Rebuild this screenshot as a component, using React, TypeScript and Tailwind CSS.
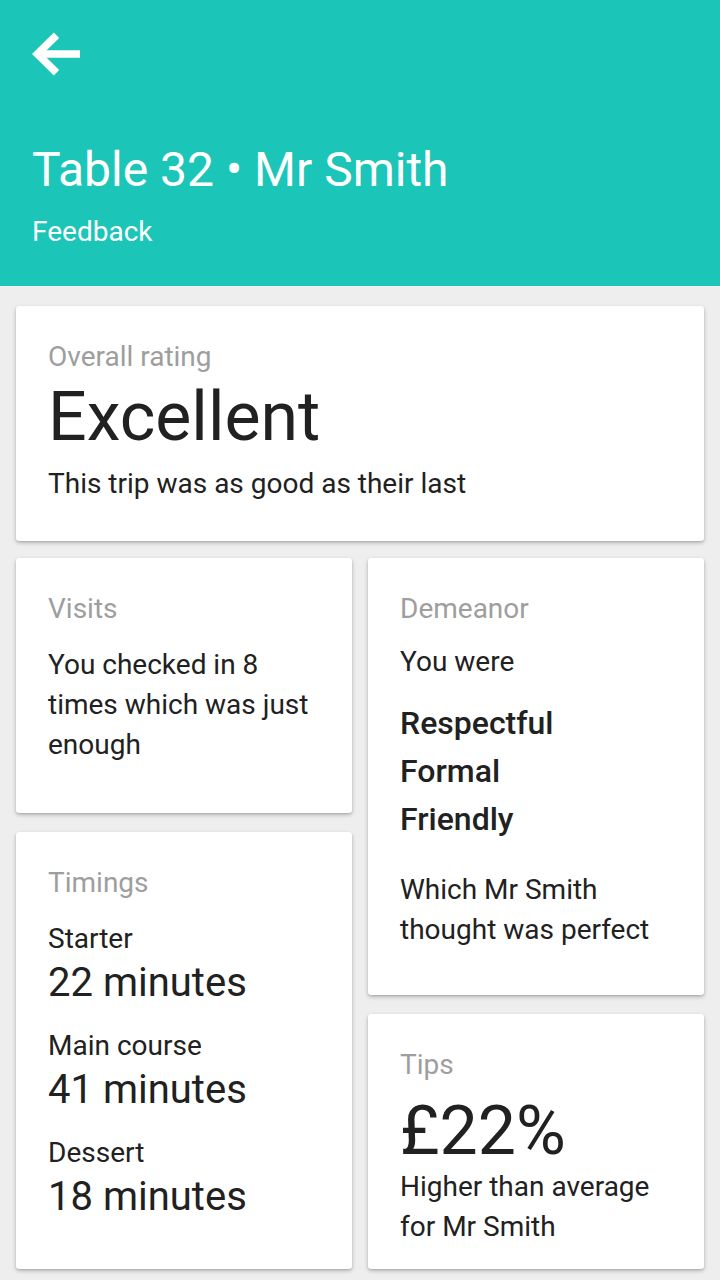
import React from 'react';

interface CardProps {
  title: string;
  className?: string;
  children: React.ReactNode;
}

// white material-style card with a grey caption on top
const Card: React.FC<CardProps> = ({ title, className = '', children }) => (
  <div
    className={`rounded-[3px] bg-white px-8 pt-[31px] shadow-[0_2px_4px_rgba(0,0,0,0.22),0_1px_2px_rgba(0,0,0,0.12)] ${className}`}
  >
    <div className="text-[28px] leading-10 text-[#9e9e9e]">{title}</div>
    {children}
  </div>
);

const timings = [
  { course: 'Starter', minutes: 22 },
  { course: 'Main course', minutes: 41 },
  { course: 'Dessert', minutes: 18 },
];

const traits = ['Respectful', 'Formal', 'Friendly'];

const App: React.FC = () => {
  return (
    <div className="min-h-[1280px] w-[720px] bg-[#eeeeee] font-['Roboto',sans-serif] text-[#212121]">
      <header className="h-[286px] bg-[#1bc5b7] px-8 pt-8 text-white">
        <svg width="48" height="44" viewBox="0 0 48 44" className="block">
          <path d="M9 22H48" stroke="white" strokeWidth="7.6" fill="none" />
          <path
            d="M24.5 3.2L5.4 22L24.5 40.8"
            stroke="white"
            strokeWidth="7.6"
            strokeLinejoin="miter"
            fill="none"
          />
        </svg>
        <h1 className="mt-[66px] text-[48px] leading-[56px]">Table 32 • Mr Smith</h1>
        <div className="mt-[14px] text-[28px] leading-10">Feedback</div>
      </header>

      <main className="flex flex-col gap-[17px] px-4 pt-5">
        <Card title="Overall rating" className="h-[235px]">
          <div className="text-[68px] leading-[80px]">Excellent</div>
          <div className="mt-[7px] text-[28px] leading-10">This trip was as good as their last</div>
        </Card>

        <div className="grid grid-cols-2 gap-4">
          <div className="flex flex-col gap-[19px]">
            <Card title="Visits" className="h-[255px]">
              <p className="mt-4 text-[28px] leading-10">You checked in 8 times which was just enough</p>
            </Card>
            <Card title="Timings" className="h-[437px]">
              <div className="mt-4 flex flex-col gap-[19px]">
                {timings.map(({ course, minutes }) => (
                  <div key={course}>
                    <div className="text-[28px] leading-10">{course}</div>
                    <div className="text-[40px] leading-[48px]">{minutes} minutes</div>
                  </div>
                ))}
              </div>
            </Card>
          </div>

          <div className="flex flex-col gap-[19px]">
            <Card title="Demeanor" className="h-[437px]">
              <div className="mt-[13px] text-[28px] leading-10">You were</div>
              <div className="mt-[17px]">
                {traits.map(t => (
                  <div key={t} className="text-[32px] font-medium leading-[48px]">
                    {t}
                  </div>
                ))}
              </div>
              <p className="mt-[27px] text-[28px] leading-10">Which Mr Smith thought was perfect</p>
            </Card>
            <Card title="Tips" className="h-[255px]">
              <div className="mt-[10px] text-[68px] leading-[72px]">£22%</div>
              <p className="text-[28px] leading-10">Higher than average for Mr Smith</p>
            </Card>
          </div>
        </div>
      </main>
    </div>
  );
};

export default App;
